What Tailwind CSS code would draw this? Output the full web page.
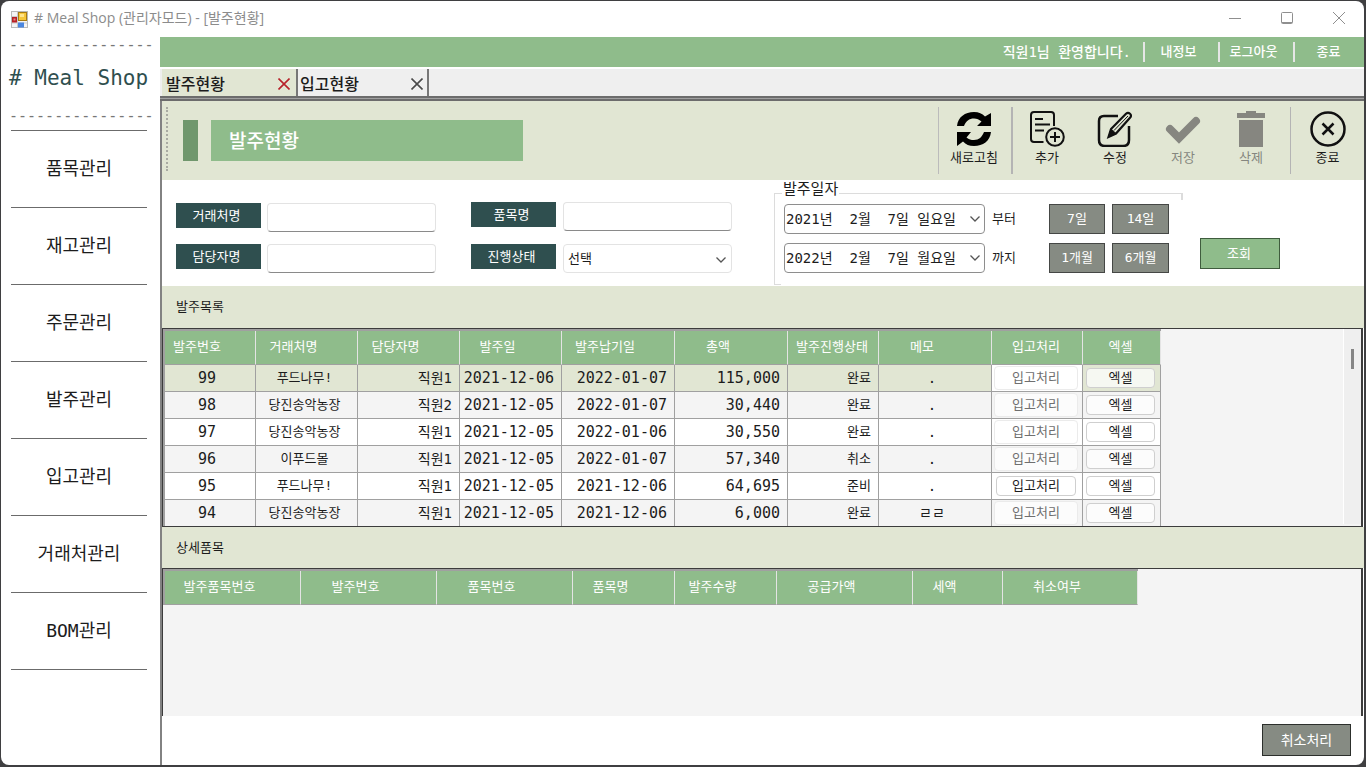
<!DOCTYPE html>
<html lang="ko">
<head>
<meta charset="utf-8">
<title># Meal Shop (관리자모드) - [발주현황]</title>
<script src="https://cdn.jsdelivr.net/npm/@tailwindcss/browser@4"></script>
</head>
<body class="h-screen overflow-hidden bg-[#3f3f41] p-px pr-0.5 pb-0.5 font-['DejaVu_Sans_Mono','Noto_Sans_CJK_KR',monospace] text-sm leading-5 text-[#1c1c1c]">
<div class="flex h-full flex-col overflow-hidden rounded-lg bg-white">

  <!-- Title bar -->
  <header class="flex h-9 shrink-0 items-center pl-2.5 font-['Open_Sans','Noto_Sans_CJK_KR',sans-serif] text-[#8c8c8c]">
    <svg class="size-[17px]" viewBox="0 0 17 17" aria-hidden="true">
      <rect x=".5" y=".5" width="16" height="16" fill="#f4f4f4" stroke="#b9b9b9"/>
      <path d="M6.500 1v15M1 5.500h15M1 12h15" stroke="#c9c9c9"/>
      <rect x="1" y="6" width="5" height="5.500" fill="#b81f24"/><rect x="2.500" y="7.500" width="2" height="2" fill="#e58a87"/>
      <rect x="7.500" y="1.500" width="8" height="8" fill="#f6c63a" stroke="#a77b12"/><rect x="9" y="3" width="4" height="3" fill="#ffe48c"/>
      <rect x="7" y="11.500" width="6" height="5" fill="#4a86e0"/>
    </svg>
    <h1 class="ml-1.5 pb-0.5 text-sm">#&nbsp;Meal Shop (관리자모드) - [발주현황]</h1>
    <div class="ml-auto flex gap-2 pr-[3px] pb-0.5">
      <button aria-label="최소화" class="grid h-8 w-11 place-items-center"><svg width="12" height="12" viewBox="0 0 12 12" stroke="#8f8f8f"><path d="M0 6.500h12"/></svg></button>
      <button aria-label="최대화" class="grid h-8 w-11 place-items-center"><svg width="12" height="12" viewBox="0 0 12 12" fill="none" stroke="#8f8f8f"><rect x=".5" y=".5" width="11" height="11" rx="1"/><path d="M1 10.500h10"/></svg></button>
      <button aria-label="닫기" class="grid h-8 w-11 place-items-center"><svg width="12" height="12" viewBox="0 0 12 12" stroke="#8f8f8f"><path d="M0 0l12 12M12 0L0 12"/></svg></button>
    </div>
  </header>

  <div class="flex min-h-0 flex-1">
    <!-- Side menu -->
    <aside class="w-[159px] shrink-0 px-2">
      <p class="h-4 text-[15px] leading-4 whitespace-nowrap text-[#777]" aria-hidden="true">----------------</p>
      <p class="flex h-[55px] items-center pb-1.5 text-[21px] leading-8 whitespace-nowrap text-[#2f4f4f]">#&nbsp;Meal&nbsp;Shop</p>
      <p class="h-[22px] text-[15px] leading-4 whitespace-nowrap text-[#777]" aria-hidden="true">----------------</p>
      <nav class="mr-[5px] ml-0.5 border-t border-[#6b6b6b] text-lg [&_a]:flex [&_a]:h-[77px] [&_a]:items-center [&_a]:justify-center [&_a]:border-b [&_a]:border-[#6b6b6b]">
        <a href="#">품목관리</a>
        <a href="#">재고관리</a>
        <a href="#">주문관리</a>
        <a href="#">발주관리</a>
        <a href="#">입고관리</a>
        <a href="#">거래처관리</a>
        <a href="#">BOM관리</a>
      </nav>
    </aside>

    <main class="flex min-w-0 flex-1 flex-col">
      <!-- User bar -->
      <div class="flex h-[30px] shrink-0 items-center justify-end bg-[#8fbc8b] font-medium text-white">
        <span class="mr-3">직원1님 환영합니다.</span>
        <a href="#" class="flex h-5 w-[75px] items-center justify-center border-l-2 border-[#e6e6e6] pr-1.5 text-[13px]">내정보</a>
        <a href="#" class="flex h-5 w-[75px] items-center justify-center border-l-2 border-[#e6e6e6] pr-1.5 text-[13px]">로그아웃</a>
        <a href="#" class="flex h-5 w-[71px] items-center justify-center border-l-2 border-[#e6e6e6] pr-0.5 text-[13px]">종료</a>
      </div>

      <!-- Document tabs -->
      <div class="mt-0.5 flex h-[27px] shrink-0 bg-[#efefef] pl-0.5 text-base font-medium">
        <div class="flex w-[136px] items-center justify-between border-r-2 border-[#777] bg-[#e1e6d3] pr-1.5 pl-1">
          <a href="#" class="pt-1">발주현황</a>
          <button aria-label="발주현황 닫기" class="pt-0.5"><svg width="12" height="12" viewBox="0 0 12 12" stroke="#b8232b" stroke-width="1.600"><path d="M.5.5l11 11M11.500.5l-11 11"/></svg></button>
        </div>
        <div class="flex w-[131px] items-center justify-between border-r-2 border-[#777] pr-1 pl-0.5">
          <a href="#" class="pt-1">입고현황</a>
          <button aria-label="입고현황 닫기" class="pt-0.5"><svg width="12" height="12" viewBox="0 0 12 12" stroke="#4a4a4a" stroke-width="1.600"><path d="M.5.5l11 11M11.500.5l-11 11"/></svg></button>
        </div>
      </div>
      <div class="h-[5px] shrink-0 border-y-2 border-[#6c6c6c] bg-[#a0a0a0]"></div>

      <div class="flex min-h-0 flex-1 flex-col border-l-2 border-[#828282]">
        <!-- Toolbar -->
        <div class="flex h-[79px] shrink-0 bg-[#e1e6d3]">
          <div class="mt-1.5 ml-1 h-16 border-l-2 border-dotted border-[#a9aba2]"></div>
          <div class="mt-[19px] ml-[15px] h-[41px] w-[15px] bg-[#70976d]"></div>
          <h2 class="mt-[19px] ml-[13px] flex h-[41px] w-[312px] items-center bg-[#8fbc8b] pl-[18px] text-[19px] font-medium text-white">발주현황</h2>
          <div class="mt-1.5 ml-auto flex h-[67px] text-[13px] leading-5 [&_button]:flex [&_button]:flex-col [&_button]:items-center [&_button]:gap-px [&_button]:pt-1 [&_svg]:size-9">
            <div class="border-l border-[#bbb]"></div>
            <button class="w-[70px]">
              <svg viewBox="0 0 36 36" aria-hidden="true"><path d="M1 15C2 6 9 1 18 1c5 0 8 1.500 11 4.500L35 2v13H21l4.500-4.500C23 8.500 21 7.500 18 7.500c-5 0-8 2.500-10 7.500zM35 21c-1 9-8 14-17 14-5 0-8-1.500-11-4.500L1 35V21h14l-4.500 5.500c2.500 2 4.500 2.500 7.500 2.500 5 0 8-3 10-8z"/></svg>
              <span>새로고침</span>
            </button>
            <div class="ml-0.5 border-l-2 border-[#b4b4b4]"></div>
            <button class="w-[68px]">
              <svg viewBox="0 0 36 36" fill="none" stroke="#111" stroke-width="2" aria-hidden="true"><path d="M14.500 31H5q-3 0-3-3V4q0-3 3-3h17q3 0 3 3v11"/><path d="M6 8h8M6 13.500h15M6 19.500h9"/><circle cx="26" cy="26" r="8.800"/><path d="M26 21v10M21 26h10"/></svg>
              <span>추가</span>
            </button>
            <button class="w-[68px]">
              <svg viewBox="0 0 36 36" fill="none" stroke="#111" stroke-width="2.500" aria-hidden="true"><path d="M21 5H7Q2 5 2 10v19q0 6 6 6h18q6 0 6-6V15"/><path d="M11.500 26l2.500-8L29 2.800q2-1.800 4 0t0 4L19 22.500z" stroke-width="2.200"/><path d="M14 18l5 4.500-7.500 3.500z" fill="#111" stroke-width="1"/><path d="M17 19.500L31 5" stroke-width="1"/></svg>
              <span>수정</span>
            </button>
            <button class="w-[68px] text-[#85867f]" disabled>
              <svg viewBox="0 0 36 36" aria-hidden="true"><path d="M5 18l9 9L31 10" fill="none" stroke="#868680" stroke-width="8" stroke-linecap="round"/></svg>
              <span>저장</span>
            </button>
            <button class="w-[68px] text-[#85867f]" disabled>
              <svg viewBox="0 0 36 36" fill="#868680" aria-hidden="true"><path d="M4 2h9V0h10v2h9v5H4zM6 9h24v27H6z"/></svg>
              <span>삭제</span>
            </button>
            <div class="ml-[5px] border-l border-[#b4b4b4]"></div>
            <button class="w-[73px]">
              <svg viewBox="0 0 36 36" fill="none" stroke="#111" stroke-width="2.500" aria-hidden="true"><circle cx="18" cy="18" r="16.500"/><path d="M12.500 12.500l11 11M23.500 12.500l-11 11"/></svg>
              <span>종료</span>
            </button>
          </div>
        </div>

        <!-- Search conditions -->
        <form class="flex h-[106px] shrink-0 overflow-hidden pl-3.5" onsubmit="return false">
          <div class="mt-[23px] grid h-[70px] grid-cols-[85px_169px] content-between gap-x-1.5 [&_label]:flex [&_label]:h-[25px] [&_label]:items-center [&_label]:justify-center [&_label]:bg-[#2f4f4f] [&_label]:pr-1 [&_label]:text-[13px] [&_label]:text-white">
            <label for="client">거래처명</label>
            <input id="client" class="h-[29px] rounded-sm border border-[#e3e3e3] border-b-[#8a8a8a] px-1 outline-none">
            <label for="manager">담당자명</label>
            <input id="manager" class="h-[29px] rounded-sm border border-[#e3e3e3] border-b-[#8a8a8a] px-1 outline-none">
          </div>
          <div class="mt-[22px] ml-[35px] grid h-[71px] grid-cols-[85px_169px] content-between gap-x-[7px] [&_label]:flex [&_label]:h-[25px] [&_label]:items-center [&_label]:justify-center [&_label]:bg-[#2f4f4f] [&_label]:pr-1 [&_label]:text-[13px] [&_label]:text-white">
            <label for="item">품목명</label>
            <input id="item" class="h-[29px] rounded-sm border border-[#e3e3e3] border-b-[#8a8a8a] px-1 outline-none">
            <label for="state">진행상태</label>
            <div class="relative">
              <select id="state" class="h-[29px] w-full appearance-none rounded-sm border border-[#e3e3e3] pl-1 text-[13px] outline-none"><option>선택</option></select>
              <svg class="pointer-events-none absolute top-3 right-1.5" width="10" height="8" viewBox="0 0 10 8" fill="none" stroke="#555" stroke-width="1.300" aria-hidden="true"><path d="M.5 1.500L5 6l4.500-4.500"/></svg>
            </div>
          </div>
          <fieldset class="relative mt-0.5 ml-[42px] h-[103px] w-[409px] border-t border-l border-[#dcdcdc] pl-[9px]">
            <legend class="-ml-0.5 px-px pb-2 text-[15px] leading-3.5">발주일자</legend>
            <span class="absolute -top-2.5 right-0 h-1.5 w-0.5 bg-[#dcdcdc]"></span>
            <span class="absolute bottom-0 left-0 h-px w-1.5 bg-[#dcdcdc]"></span>
            <div class="grid grid-cols-[201px_50px_56px_57px] items-center gap-x-[7px] gap-y-[9px]">
              <div class="flex h-[30px] items-center rounded-sm border border-[#8e8e8e]">
                <input aria-label="발주일자 시작" value="2021년  2월  7일 일요일" class="w-0 flex-1 pl-px outline-none">
                <button aria-label="시작일 달력" class="px-1"><svg width="10" height="8" viewBox="0 0 10 8" fill="none" stroke="#555" stroke-width="1.300"><path d="M.5 1.500L5 6l4.500-4.500"/></svg></button>
              </div>
              <span class="text-[13px]">부터</span>
              <button class="h-[30px] border border-[#454745] bg-[#868b83] text-[13px] text-white">7일</button>
              <button class="h-[30px] border border-[#454745] bg-[#868b83] text-[13px] text-white">14일</button>
              <div class="flex h-[30px] items-center rounded-sm border border-[#8e8e8e]">
                <input aria-label="발주일자 종료" value="2022년  2월  7일 월요일" class="w-0 flex-1 pl-px outline-none">
                <button aria-label="종료일 달력" class="px-1"><svg width="10" height="8" viewBox="0 0 10 8" fill="none" stroke="#555" stroke-width="1.300"><path d="M.5 1.500L5 6l4.500-4.500"/></svg></button>
              </div>
              <span class="text-[13px]">까지</span>
              <button class="h-[30px] border border-[#454745] bg-[#868b83] text-[13px] text-white">1개월</button>
              <button class="h-[30px] border border-[#454745] bg-[#868b83] text-[13px] text-white">6개월</button>
            </div>
          </fieldset>
          <button class="mt-[58px] ml-[17px] h-[31px] w-20 border border-[#3f5c3e] bg-[#8fbc8b] pr-0.5 text-[13px] text-white">조회</button>
        </form>

        <!-- Order list -->
        <h3 class="flex h-[42px] shrink-0 items-center bg-[#e1e6d3] pl-3.5 text-[13px]">발주목록</h3>
        <section class="mr-px flex h-[199px] shrink-0 border border-r-2 border-[#3c3c3c] bg-[#f4f4f4]">
          <div class="min-w-0 flex-1 overflow-hidden">
            <table class="w-[998px] table-fixed border-separate border-spacing-0 border-t-2 border-l-2 border-[#a0a0a0] [&_td]:h-[27px] [&_td]:border-r [&_td]:border-b [&_td]:border-[#a0a0a0] [&_td]:p-0 [&_td]:leading-5 [&_th]:h-[34px] [&_th]:border-r [&_th]:border-b [&_th]:border-[#a0a0a0] [&_th]:border-r-[#e4e4e4] [&_th]:bg-[#8fbc8b] [&_th]:p-0 [&_th]:pr-0.5 [&_th]:pb-0.5 [&_th]:text-[13px] [&_th]:font-normal [&_th]:whitespace-nowrap [&_th]:text-white [&_tbody_tr:nth-child(odd)]:bg-white">
              <colgroup><col class="w-[91px]"><col class="w-[102px]"><col class="w-[102px]"><col class="w-[102px]"><col class="w-[113px]"><col class="w-[113px]"><col class="w-[91px]"><col class="w-[113px]"><col class="w-[91px]"><col class="w-[78px]"></colgroup>
              <thead>
                <tr>
                  <th><span class="pr-6">발주번호</span></th><th><span class="pr-6">거래처명</span></th><th><span class="pr-6">담당자명</span></th><th><span class="pr-6">발주일</span></th><th><span class="pr-6">발주납기일</span></th><th><span class="pr-6">총액</span></th><th>발주진행상태</th><th><span class="pr-6">메모</span></th><th>입고처리</th><th>엑셀</th>
                </tr>
              </thead>
              <tbody class="[&_td:nth-child(1)]:pr-1.5 [&_td:nth-child(1)]:text-center [&_td:nth-child(1)]:text-[15px] [&_td:nth-child(2)]:pr-1 [&_td:nth-child(2)]:text-center [&_td:nth-child(2)]:text-[13px] [&_td:nth-child(3)]:pr-[7px] [&_td:nth-child(3)]:text-right [&_td:nth-child(4)]:pr-[7px] [&_td:nth-child(4)]:text-right [&_td:nth-child(4)]:text-[15px] [&_td:nth-child(5)]:pr-[7px] [&_td:nth-child(5)]:text-right [&_td:nth-child(5)]:text-[15px] [&_td:nth-child(6)]:pr-[7px] [&_td:nth-child(6)]:text-right [&_td:nth-child(6)]:text-[15px] [&_td:nth-child(7)]:pr-[7px] [&_td:nth-child(7)]:text-right [&_td:nth-child(7)]:text-[13px] [&_td:nth-child(8)]:pr-1.5 [&_td:nth-child(8)]:text-center [&_td:nth-child(9)]:pr-1 [&_td:nth-child(9)]:pl-0.5 [&_td:nth-child(10)]:pr-[5px] [&_td:nth-child(10)]:pl-[3px] [&_button]:block [&_button]:w-full [&_button]:rounded [&_button]:border [&_button]:border-[#cfcfcf] [&_button]:bg-white/70 [&_button]:text-[13px] [&_button]:leading-[18px] [&_button:disabled]:border-[#ebebeb] [&_button:disabled]:text-[#6f6f6f] [&_button:disabled]:leading-[22px]">
                <tr class="bg-[#e1e6d3]!"><td>99</td><td>푸드나무!</td><td>직원1</td><td>2021-12-06</td><td>2022-01-07</td><td>115,000</td><td>완료</td><td>.</td><td class="bg-white"><button disabled>입고처리</button></td><td><button>엑셀</button></td></tr>
                <tr><td>98</td><td>당진송악농장</td><td>직원2</td><td>2021-12-05</td><td>2022-01-07</td><td>30,440</td><td>완료</td><td>.</td><td><button disabled>입고처리</button></td><td><button>엑셀</button></td></tr>
                <tr><td>97</td><td>당진송악농장</td><td>직원1</td><td>2021-12-05</td><td>2022-01-06</td><td>30,550</td><td>완료</td><td>.</td><td><button disabled>입고처리</button></td><td><button>엑셀</button></td></tr>
                <tr><td>96</td><td>이푸드몰</td><td>직원1</td><td>2021-12-05</td><td>2022-01-07</td><td>57,340</td><td>취소</td><td>.</td><td><button disabled>입고처리</button></td><td><button>엑셀</button></td></tr>
                <tr><td>95</td><td>푸드나무!</td><td>직원1</td><td>2021-12-05</td><td>2021-12-06</td><td>64,695</td><td>준비</td><td>.</td><td><div class="px-0.5"><button>입고처리</button></div></td><td><button>엑셀</button></td></tr>
                <tr><td>94</td><td>당진송악농장</td><td>직원1</td><td>2021-12-05</td><td>2021-12-06</td><td>6,000</td><td>완료</td><td>ㄹㄹ</td><td><button disabled>입고처리</button></td><td><button>엑셀</button></td></tr>
              </tbody>
            </table>
          </div>
          <div class="mb-0.5 flex w-[18px] justify-center border-l border-white bg-[#efefef] pt-5"><div class="h-5 w-[3px] bg-[#858585]"></div></div>
        </section>

        <!-- Order details -->
        <h3 class="flex h-[41px] shrink-0 items-center bg-[#e1e6d3] pl-3.5 text-[13px]">상세품목</h3>
        <section class="mr-px min-h-0 flex-1 overflow-hidden border-t border-r-2 border-l border-[#3c3c3c] bg-[#f4f4f4]">
          <table class="w-[975px] table-fixed border-separate border-spacing-0 border-t-2 border-l-2 border-[#a0a0a0] [&_th]:h-[34px] [&_th]:border-r [&_th]:border-b [&_th]:border-[#a0a0a0] [&_th]:border-r-[#e4e4e4] [&_th]:bg-[#8fbc8b] [&_th]:p-0 [&_th]:pr-[26px] [&_th]:pb-0.5 [&_th]:text-[13px] [&_th]:font-normal [&_th]:text-white">
            <colgroup><col class="w-[136px]"><col class="w-[136px]"><col class="w-[136px]"><col class="w-[102px]"><col class="w-[102px]"><col class="w-[136px]"><col class="w-[90px]"><col class="w-[135px]"></colgroup>
            <thead><tr><th>발주품목번호</th><th>발주번호</th><th>품목번호</th><th>품목명</th><th>발주수량</th><th>공급가액</th><th>세액</th><th>취소여부</th></tr></thead>
          </table>
        </section>

        <footer class="flex h-[49px] shrink-0 items-center justify-end pr-[13px] pb-0.5">
          <button class="h-8 w-[89px] border border-[#2c2f2c] bg-[#868b83] text-white">취소처리</button>
        </footer>
      </div>
    </main>
  </div>
</div>
</body>
</html>
